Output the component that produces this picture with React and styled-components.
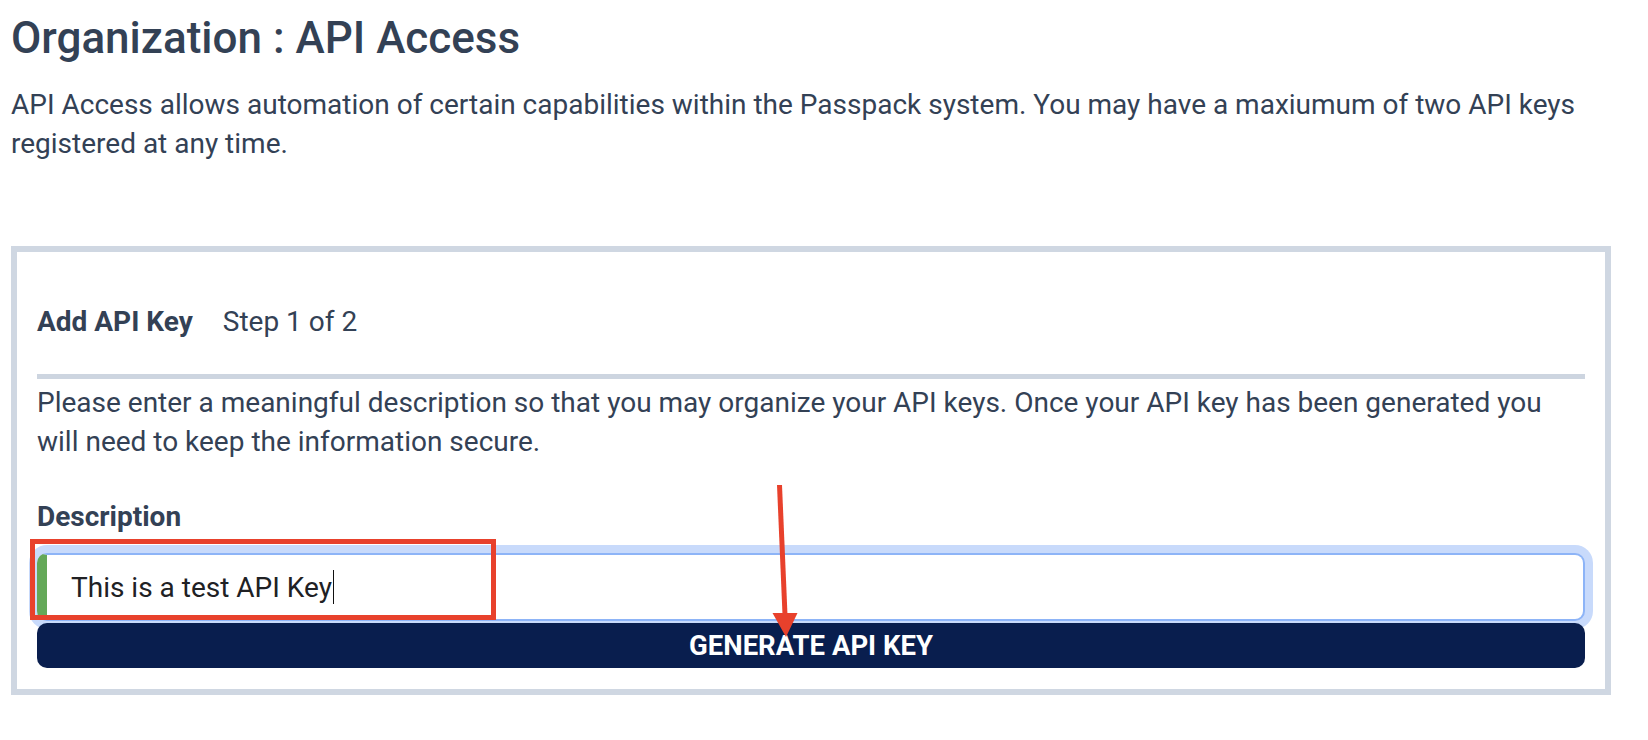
import React from "react"
import styled, { createGlobalStyle } from "styled-components"

const GlobalStyle = createGlobalStyle`
  html, body {
    margin: 0;
    padding: 0;
    background: #ffffff;
  }
  body {
    font-family: Roboto, "Liberation Sans", Arial, sans-serif;
    color: #334155;
  }
`

const text = {
  slate: "#334155",
  ink: "#202124",
  red: "#e8412c",
}

export default function App() {
  return (
    <>
      <GlobalStyle />
      <Page>
        <Title>Organization : API Access</Title>
        <Intro>
          API Access allows automation of certain capabilities within the
          Passpack system. You may have a maxiumum of two API keys registered
          at any time.
        </Intro>

        <Card>
          <CardHeader>
            <HeaderTitle>Add API Key</HeaderTitle>
            <StepLabel>Step 1 of 2</StepLabel>
          </CardHeader>
          <Divider />
          <Help>
            Please enter a meaningful description so that you may organize your
            API keys. Once your API key has been generated you will need to keep
            the information secure.
          </Help>
          <Label>Description</Label>
          <Field>
            <FieldText>This is a test API Key</FieldText>
            <Caret />
          </Field>
          <GenerateButton type="button">GENERATE API KEY</GenerateButton>
        </Card>

        {/* screenshot annotations */}
        <Highlight />
        <Arrow width="40" height="160" viewBox="0 0 40 160">
          <line
            x1="14.5"
            y1="2"
            x2="20"
            y2="132"
            stroke={text.red}
            strokeWidth="5"
          />
          <polygon points="7.5,130 32.5,130 21,154" fill={text.red} />
        </Arrow>
      </Page>
    </>
  )
}

const Page = styled.div`
  position: relative;
  padding: 13px 11px 40px;
  width: 1600px;
`

const Title = styled.h1`
  margin: 0;
  font-size: 44px;
  line-height: 50px;
  font-weight: 500;
  color: ${text.slate};
`

const Intro = styled.p`
  margin: 22px 0 0;
  font-size: 28px;
  line-height: 39px;
  color: ${text.slate};
`

const Card = styled.section`
  box-sizing: border-box;
  width: 1600px;
  margin-top: 83px;
  border: 6px solid #cfd7e2;
  padding: 20px 20px 21px;
`

const CardHeader = styled.div`
  display: flex;
  align-items: baseline;
  gap: 30px;
  padding: 30px 0 33px;
  font-size: 28px;
  line-height: 39px;
`

const HeaderTitle = styled.span`
  font-weight: 700;
  color: ${text.slate};
`

const StepLabel = styled.span`
  font-weight: 400;
  color: ${text.slate};
`

const Divider = styled.hr`
  margin: 0;
  border: 0;
  height: 5px;
  background: #cdd5e0;
`

const Help = styled.p`
  margin: 4px 0 0;
  font-size: 28px;
  line-height: 39px;
  color: ${text.slate};
`

const Label = styled.div`
  margin-top: 36px;
  font-size: 28px;
  line-height: 39px;
  font-weight: 700;
  color: ${text.slate};
`

const Field = styled.div`
  box-sizing: border-box;
  display: flex;
  align-items: center;
  height: 68px;
  margin-top: 17px;
  padding-left: 24px;
  border: 2px solid #8db4f7;
  border-left: 10px solid #64a858;
  border-radius: 10px;
  box-shadow: 0 0 0 8px #c8dafb;
  background: #ffffff;
`

const FieldText = styled.span`
  font-size: 28px;
  color: ${text.ink};
`

const Caret = styled.span`
  display: inline-block;
  width: 1.5px;
  height: 34px;
  margin-left: 1px;
  background: #111111;
`

const GenerateButton = styled.button`
  position: relative;
  display: block;
  width: 100%;
  height: 45px;
  margin-top: 2px;
  border: 0;
  border-radius: 10px;
  background: #091e4e;
  color: #ffffff;
  font-family: Roboto, "Liberation Sans", Arial, sans-serif;
  font-size: 27.5px;
  font-weight: 700;
  cursor: pointer;
`

const Highlight = styled.div`
  position: absolute;
  left: 30px;
  top: 539px;
  width: 466px;
  height: 81px;
  box-sizing: border-box;
  border: 5px solid ${text.red};
  pointer-events: none;
`

const Arrow = styled.svg`
  position: absolute;
  left: 765px;
  top: 483px;
  overflow: visible;
  pointer-events: none;
`
